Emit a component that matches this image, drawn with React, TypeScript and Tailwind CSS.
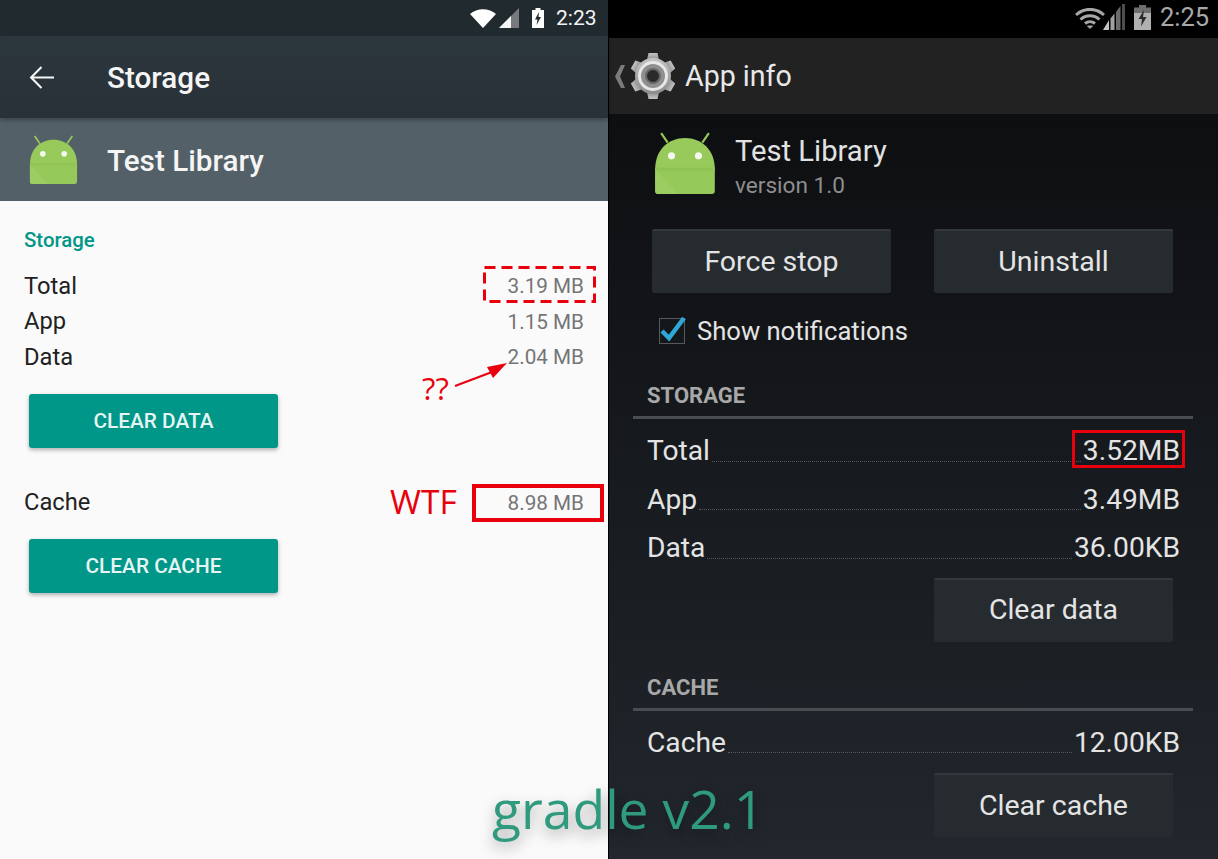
import React from "react";

function Android({ className }: { className?: string }) {
  return (
    <svg viewBox="0 0 52 52" className={className}>
      <path d="M11.5 9 L6 1 M40.5 9 L46 1" stroke="#97c95a" strokeWidth="1.8" fill="none" />
      <path d="M1 31 C1 15 12 5 26 5 C40 5 51 15 51 31 Z" fill="#97ca5b" />
      <path d="M1 30 H51 V49.5 a2.5 2.5 0 0 1 -2.5 2.5 H3.5 a2.5 2.5 0 0 1 -2.5 -2.5 Z" fill="#95c959" />
      <path d="M1 31 L20 52 H3.5 a2.5 2.5 0 0 1 -2.5 -2.5 Z" fill="#9ccd62" />
      <path d="M1 30 H51 V31 H1 Z" fill="#8cc051" />
      <path d="M1 31 H51 V33 H3 Z" fill="#91c556" />
      <circle cx="14.7" cy="20" r="3" fill="#f4f8ee" />
      <circle cx="37.3" cy="20" r="3" fill="#f4f8ee" />
    </svg>
  );
}

function Gear({ className }: { className?: string }) {
  const teeth = [0, 60, 120, 180, 240, 300];
  return (
    <svg viewBox="0 0 48 48" className={className}>
      <defs>
        <linearGradient id="gearFill" x1="0" y1="0" x2="0" y2="1">
          <stop offset="0" stopColor="#c4c4c4" />
          <stop offset="1" stopColor="#8c8c8c" />
        </linearGradient>
      </defs>
      {teeth.map((a) => (
        <path key={a} d="M18 8 L19.5 1 H28.5 L30 8 Z" fill="url(#gearFill)" transform={`rotate(${a} 24 24)`} />
      ))}
      <circle cx="24" cy="24" r="18" fill="url(#gearFill)" />
      <circle cx="24" cy="24" r="13.5" fill="#8f8f8f" stroke="#e8e8e8" strokeWidth="3" />
      <circle cx="24" cy="24" r="7" fill="#2a2a2a" stroke="#686868" strokeWidth="2" />
    </svg>
  );
}

function Row({ label, value }: { label: string; value: string }) {
  return (
    <div className="flex h-[35.5px] items-center justify-between">
      <span className="text-[23.7px] text-[#212121]">{label}</span>
      <span className="text-[20.7px] text-[#757575]">{value}</span>
    </div>
  );
}

function GreenButton({ children }: { children: React.ReactNode }) {
  return (
    <div className="ml-[5px] flex h-[54px] w-[249px] items-center justify-center rounded-[3px] bg-[#009688] pt-[2px] text-[20.8px] font-medium text-[#e6f5f3] shadow-[0_2px_4px_rgba(0,0,0,0.3)]">
      {children}
    </div>
  );
}

function DarkButton({ children }: { children: React.ReactNode }) {
  return (
    <div className="flex h-16 w-[239px] items-center justify-center rounded-[2px] border-t-2 border-[#33383d] bg-[#262b30] text-[28.5px] text-[#e4e4e4]">
      {children}
    </div>
  );
}

function DarkRow({ label, value }: { label: string; value: string }) {
  return (
    <div className="flex h-[48.5px] items-center">
      <span className="text-[28.2px] text-[#e4e4e4]">{label}</span>
      <span className="mx-[2px] mt-[20px] flex-1 border-b border-dotted border-[#555a60]" />
      <span className="text-[28.2px] text-[#e4e4e4]">{value}</span>
    </div>
  );
}

function SectionHead({ children }: { children: React.ReactNode }) {
  return (
    <div className="border-b-[3px] border-[#4a4e53] pb-[8px] pl-[14px] pt-px text-[22px] font-bold leading-[25px] text-[#a8a8a8]">{children}</div>
  );
}

export default function App() {
  return (
    <div className="relative flex h-[859px] w-[1218px] overflow-hidden bg-black font-['Roboto',sans-serif]">
      {/* Left phone */}
      <div className="flex w-[608px] flex-col bg-[#fafafa]">
        <div className="flex h-9 items-center bg-[#212a2f] pl-[470px]">
          <svg viewBox="0 0 26 19" className="h-[19px] w-[26px]">
            <path d="M0 5 C7 -1.5 19 -1.5 26 5 L13 19 Z" fill="#ffffff" />
          </svg>
          <svg viewBox="0 0 20 20" className="ml-[3px] h-[20px] w-[20px]">
            <path d="M20 0 V20 H0 Z" fill="#77797c" />
            <path d="M12 8 V20 H0 Z" fill="#f5f5f5" />
          </svg>
          <svg viewBox="0 0 12 20" className="ml-[13px] h-[20px] w-[12px]">
            <path d="M3.5 0 H8.5 V2 H12 V20 H0 V2 H3.5 Z" fill="#ffffff" />
            <path d="M7 4 L3 11.5 H5.5 L4.5 17 L9 9 H6.5 Z" fill="#212a2f" />
          </svg>
          <span className="ml-[12px] text-[21px] leading-none text-[#f5f5f5]">2:23</span>
        </div>
        <div className="relative z-10 flex h-[82px] items-center bg-gradient-to-b from-[#2c373d] to-[#283137] shadow-[0_2px_4px_rgba(0,0,0,0.3)]">
          <svg viewBox="0 0 24 24" className="ml-[29px] h-[25px] w-[25px]" fill="none" stroke="#f5f5f5" strokeWidth="2">
            <path d="M24 12 H2 M12 2 L2 12 L12 22" />
          </svg>
          <span className="ml-[53px] mt-[2px] text-[29.7px] font-medium text-[#f5f5f5]">Storage</span>
        </div>
        <div className="flex h-[83px] items-center bg-[#536068]">
          <Android className="ml-[29px] h-[49px] w-[49px]" />
          <span className="ml-[29px] mt-[3px] text-[29.7px] font-medium text-[#f5f5f5]">Test Library</span>
        </div>
        <div className="px-6 pt-[26px]">
          <div className="text-[20.4px] font-medium leading-[26px] text-[#009688]">Storage</div>
          <div className="mt-[16px]">
            <Row label="Total" value="3.19 MB" />
            <Row label="App" value="1.15 MB" />
            <Row label="Data" value="2.04 MB" />
          </div>
          <div className="mt-[18px]">
            <GreenButton>CLEAR DATA</GreenButton>
          </div>
          <div className="mt-[38px]">
            <Row label="Cache" value="8.98 MB" />
          </div>
          <div className="mt-[18px]">
            <GreenButton>CLEAR CACHE</GreenButton>
          </div>
        </div>
      </div>

      {/* Divider */}
      <div className="w-px bg-black" />

      {/* Right phone */}
      <div className="flex flex-1 flex-col bg-gradient-to-b from-[#0a0b0d] to-[#22272d]">
        <div className="flex h-[38px] items-center bg-black pl-[466px]">
          <svg viewBox="0 0 30 21" className="-mt-[2px] h-[21px] w-[30px]" fill="none" stroke="#a6a6a6" strokeWidth="3">
            <path d="M1 7 C9 -0.5 21 -0.5 29 7" />
            <path d="M5.5 11.5 C11 6.5 19 6.5 24.5 11.5" />
            <path d="M10 15.5 C13 13 17 13 20 15.5" />
            <path d="M12.5 18 L15 20.5 L17.5 18 Z" fill="#a6a6a6" strokeWidth="1" />
          </svg>
          <svg viewBox="0 0 22 26" className="-ml-[2px] -mt-[4px] h-[26px] w-[22px]">
            <path d="M22 0 H19 V26 H22 Z" fill="#4d4d4d" />
            <path d="M17.5 2 V26 H13 V8 Z" fill="#6b6b6b" />
            <path d="M11.5 9.5 V26 H7.5 V14.5 Z" fill="#a0a0a0" />
            <path d="M6 16 V26 H0 Z" fill="#c4c4c4" />
          </svg>
          <svg viewBox="0 0 17 25" className="ml-[9px] -mt-[4px] h-[25px] w-[17px]">
            <path d="M5 0 H12 V2.5 H17 V25 H0 V2.5 H5 Z" fill="#6e6e6e" />
            <path d="M0 8 H17 V25 H0 Z" fill="#b0b0b0" />
            <path d="M10 5 L4.5 14 H8 L7 21.5 L12.5 12 H9 Z" fill="#2a2a2a" />
          </svg>
          <span className="ml-[9px] -mt-[2px] text-[25.5px] leading-none text-[#a8a8a8]">2:25</span>
        </div>
        <div className="flex h-[76px] items-center bg-[#222222]">
          <svg viewBox="0 0 10 23" className="ml-[6px] h-[23px] w-[10px]">
            <path d="M6 0 H10 L5 11.5 L10 23 H6 L0 11.5 Z" fill="#7c7c7c" />
          </svg>
          <Gear className="ml-[4px] h-[48px] w-[48px]" />
          <span className="ml-[8px] mt-[1px] text-[28.6px] text-[#e8e8e8]">App info</span>
        </div>
        <div className="flex h-[84px] pl-[45px] pt-[18px]">
          <Android className="-mt-px h-[64px] w-[62px]" />
          <div className="ml-[19px]">
            <div className="text-[29.2px] leading-[38px] text-[#e2e2e2]">Test Library</div>
            <div className="mt-px text-[22.6px] leading-[30px] text-[#8e8e8e]">version 1.0</div>
          </div>
        </div>
        <div className="ml-[43px] mt-[31px] flex gap-[43px]">
          <DarkButton>Force stop</DarkButton>
          <DarkButton>Uninstall</DarkButton>
        </div>
        <div className="ml-[50px] mt-[24px] flex h-[28px] items-center">
          <div className="relative h-[26px] w-[26px] border border-[#55595e] bg-[#15181b]">
            <svg viewBox="0 0 30 30" className="absolute -right-[3px] -top-[5px] h-[30px] w-[30px]" fill="none" stroke="#2fa8d8" strokeWidth="4.5">
              <path d="M5 17 L12 24 L27 4" />
            </svg>
          </div>
          <span className="ml-[12px] text-[25.6px] text-[#e4e4e4]">Show notifications</span>
        </div>
        <div className="ml-[24px] mr-[25px] mt-[37px]">
          <SectionHead>STORAGE</SectionHead>
          <div className="pl-[14px] pr-[13px] pt-[8px]">
            <DarkRow label="Total" value="3.52MB" />
            <DarkRow label="App" value="3.49MB" />
            <DarkRow label="Data" value="36.00KB" />
          </div>
        </div>
        <div className="ml-[325px] mt-[5px]">
          <DarkButton>Clear data</DarkButton>
        </div>
        <div className="ml-[24px] mr-[25px] mt-[32px]">
          <SectionHead>CACHE</SectionHead>
          <div className="pl-[14px] pr-[13px] pt-[8px]">
            <DarkRow label="Cache" value="12.00KB" />
          </div>
        </div>
        <div className="ml-[325px] mt-[6px]">
          <DarkButton>Clear cache</DarkButton>
        </div>
      </div>

      {/* Annotations */}
      <svg viewBox="0 0 113 37" className="absolute left-[483px] top-[266px] h-[37px] w-[113px]" fill="none">
        <rect x="1.5" y="1.5" width="110" height="34" stroke="#e8000d" strokeWidth="3" strokeDasharray="11 6" />
      </svg>
      <div className="absolute left-[472px] top-[484px] h-[38px] w-[132px] border-[4px] border-[#e8000d]" />
      <div className="absolute left-[1072px] top-[430px] h-[38px] w-[113px] border-[3px] border-[#e8000d]" />
      <div className="absolute left-[390px] top-[478px] font-['Open_Sans',sans-serif] text-[33.5px] leading-[46px] text-[#e8000d]">WTF</div>
      <div className="absolute left-[422px] top-[368px] font-['Open_Sans',sans-serif] text-[31px] leading-[40px] text-[#e8000d]">??</div>
      <svg viewBox="0 0 60 30" className="absolute left-[452px] top-[360px] h-[30px] w-[60px]">
        <path d="M3 26 L40 12" stroke="#e8000d" strokeWidth="2" />
        <path d="M35 7 L55 3 L41 18 Z" fill="#e8000d" />
      </svg>
      <div className="absolute left-[492px] top-[771px] font-['Open_Sans',sans-serif] text-[53.4px] leading-[76px] text-[#2f9a7e] [text-shadow:0_6px_14px_rgba(0,0,0,0.35)]">gradle v2.1</div>
    </div>
  );
}
